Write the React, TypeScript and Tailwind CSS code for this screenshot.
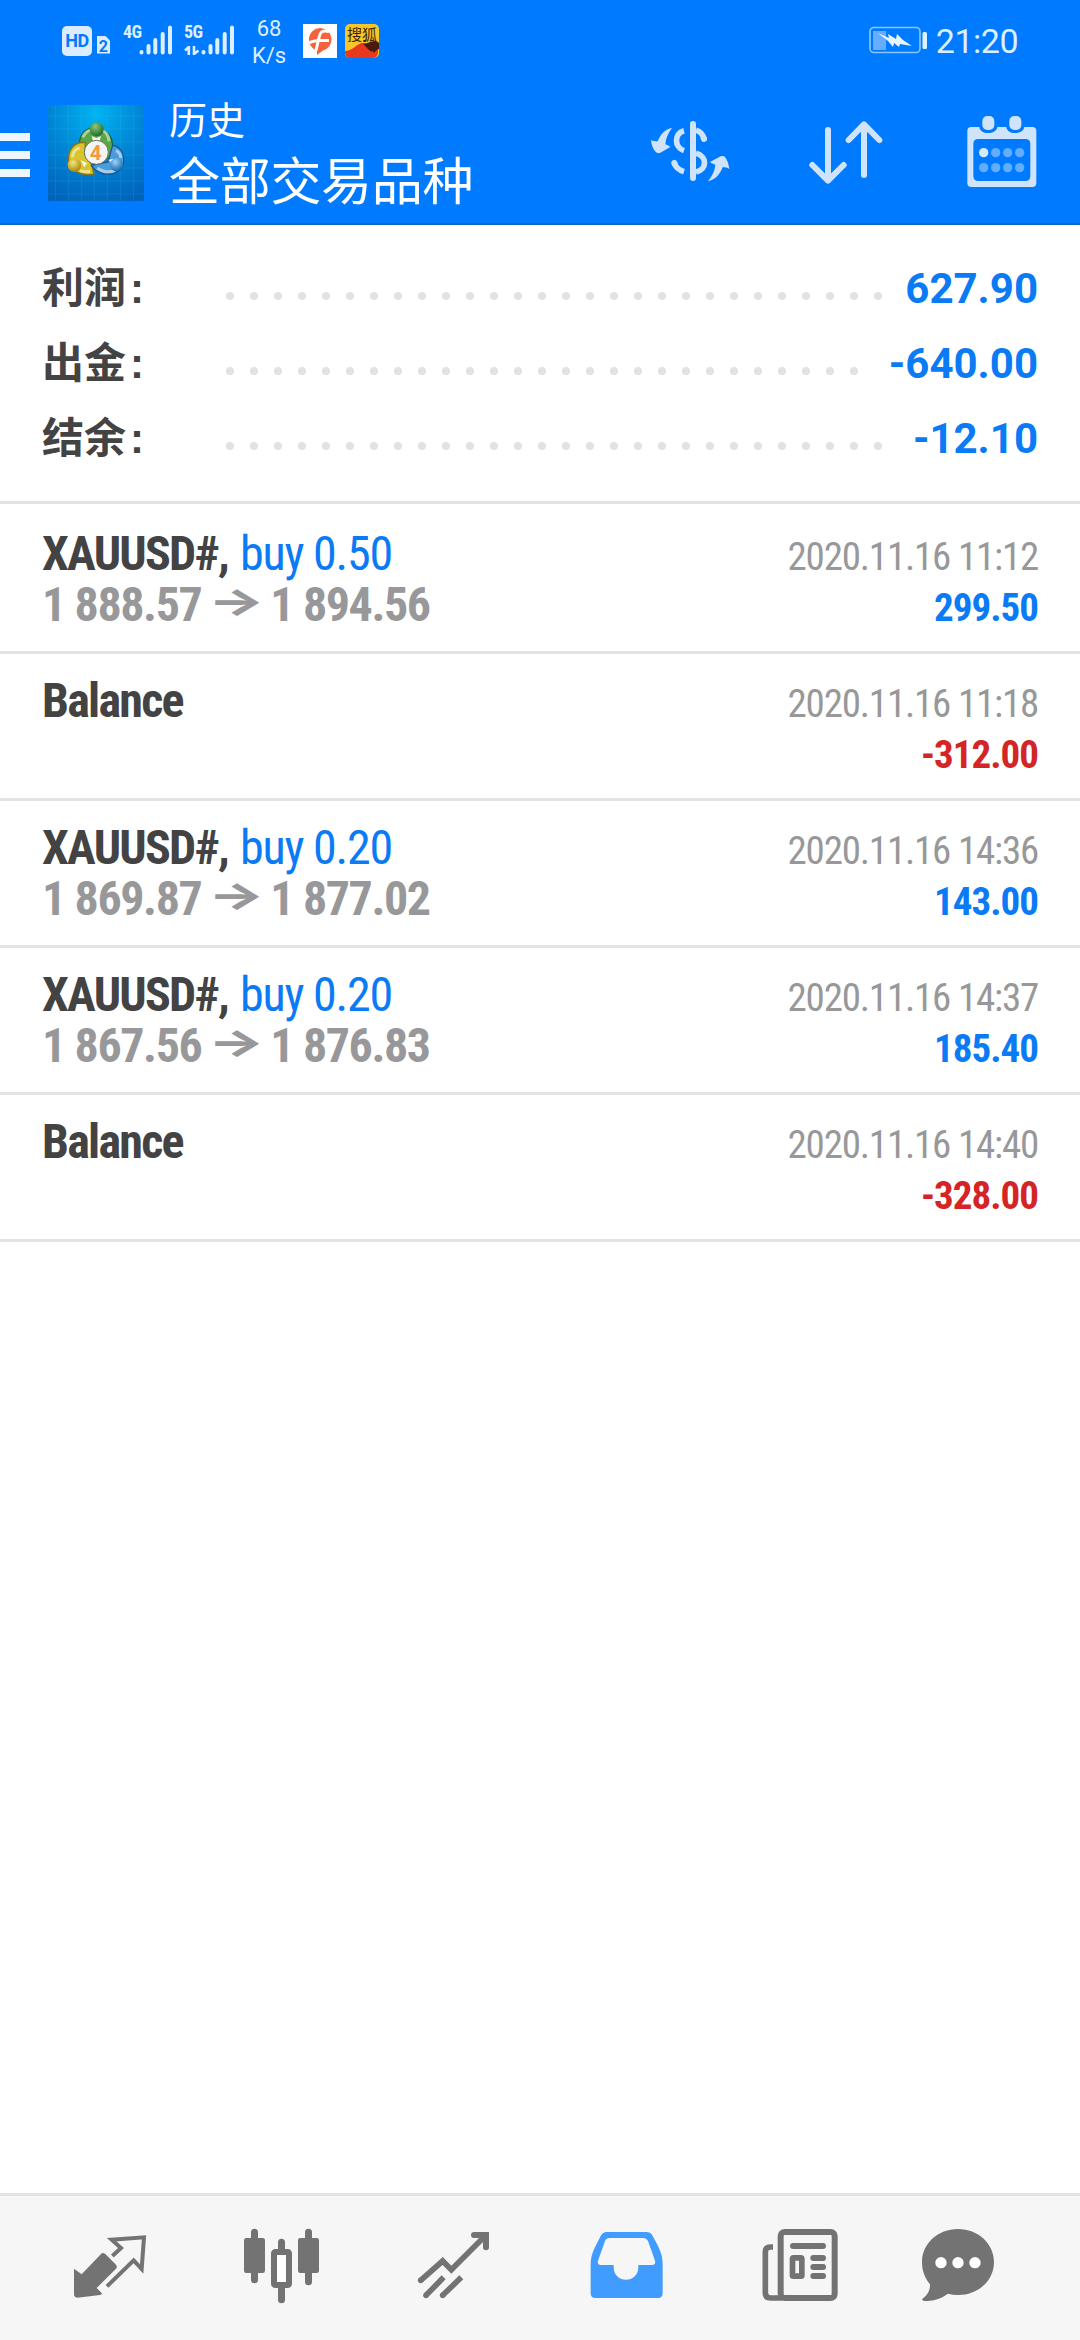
import type { ReactNode } from "react";

type SummaryLine = {
  label: string;
  value: string;
};

type Deal = {
  title: string;
  side?: string;
  open?: string;
  close?: string;
  time: string;
  profit: string;
};

const summary: SummaryLine[] = [
  { label: "利润", value: "627.90" },
  { label: "出金", value: "-640.00" },
  { label: "结余", value: "-12.10" },
];

const deals: Deal[] = [
  { title: "XAUUSD#,", side: "buy 0.50", open: "1 888.57", close: "1 894.56", time: "2020.11.16 11:12", profit: "299.50" },
  { title: "Balance", time: "2020.11.16 11:18", profit: "-312.00" },
  { title: "XAUUSD#,", side: "buy 0.20", open: "1 869.87", close: "1 877.02", time: "2020.11.16 14:36", profit: "143.00" },
  { title: "XAUUSD#,", side: "buy 0.20", open: "1 867.56", close: "1 876.83", time: "2020.11.16 14:37", profit: "185.40" },
  { title: "Balance", time: "2020.11.16 14:40", profit: "-328.00" },
];

function SignalBars() {
  return (
    <svg className="w-[33px] h-[30px]" viewBox="0 0 33 30" stroke="#dcefff" strokeWidth="4" strokeLinecap="round">
      <path d="M2.5 27v.5M9.5 21v6.5M16.3 15v12.5M23.7 9v18.5M31 2.5v25" />
    </svg>
  );
}

function StatusBar() {
  return (
    <div className="flex h-[82px] px-[62px] text-[#dcefff]">
      <div className="mt-[26px] w-[30px] h-[30px] rounded-[5px] bg-[#dcecff] text-[#007aff] text-[18px] leading-[30px] font-bold text-center tracking-[-0.5px]">
        HD
      </div>
      <svg className="mt-[35px] ml-[5px] w-[13px] h-[19px]" viewBox="0 0 13 19">
        <path d="M0 1h8.5l4.500 4.500v13H0z" fill="#dcecff" />
        <text x="6.3" y="16.5" fontSize="16" fontWeight="700" textAnchor="middle" fill="#007aff">2</text>
      </svg>
      <div className="flex mt-[25px] ml-[13px]">
        <span className="w-[16px] font-['Roboto_Condensed'] font-bold text-[18px] leading-[14px] tracking-[-0.5px]">4G</span>
        <SignalBars />
      </div>
      <div className="flex mt-[25px] ml-[12px]">
        <div className="w-[17px]">
          <span className="block font-['Roboto_Condensed'] font-bold text-[18px] leading-[14px] tracking-[-0.5px]">5G</span>
          <svg className="mt-[7px] w-[16px] h-[9px]" viewBox="0 0 16 9" fill="none" stroke="#dcefff" strokeWidth="2.6">
            <path d="M1 4.500L4.800 1V9M10 0v8L14.500 4.500" />
          </svg>
        </div>
        <SignalBars />
      </div>
      <div className="mt-[15px] ml-[15px] w-[40px] text-center text-[22px] leading-[27px]">
        68
        <br />
        K/s
      </div>
      <svg className="mt-[24px] ml-[14px] w-[34px] h-[34px]" viewBox="0 0 34 34">
        <path d="M0 0h34v34H0z" fill="#fff" />
        <path d="M17 4a11.500 11.500 0 0 1 3 22.600L14 31v-4.500A11.500 11.500 0 0 1 17 4z" fill="#f4633c" />
        <path d="M26 7.500c-7-2-9 1-10 6l-3 13M6 19c5-3 10-2.500 14-2.500h6" fill="none" stroke="#fff" strokeWidth="3" />
      </svg>
      <svg className="mt-[24px] ml-[8px] w-[34px] h-[34px]" viewBox="0 0 34 34">
        <rect width="34" height="34" rx="5" fill="#f7c52c" />
        <path d="M0 27c8 0 12-8 18-8 7 0 6 5 15 5v5q-1 5-5 5H5q-4 0-5-5z" fill="#e8391f" />
        <path d="M17 19c5 3 12-6 17 0v6c-4 1-5 6-6 2-3 2-6-4-11-8z" fill="#4a1a0c" />
        <text x="17" y="16" fontSize="15" textAnchor="middle" fill="#3a2506" className="font-['Noto_Sans_CJK_SC']">搜狐</text>
      </svg>
      <svg className="mt-[26px] ml-auto w-[59px] h-[28px]" viewBox="0 0 59 28">
        <rect x="1" y="1.500" width="50" height="25" rx="4" fill="none" stroke="#8cc8ff" strokeWidth="1.600" />
        <path d="M4 5h13v19H4z" fill="#66adff" />
        <path d="M9 7l11 5-1-4 8 5 1-5 6 6 9 6-12-2-1 3-5-4-1 4-5-6z" fill="#eaf6ff" />
        <rect x="53.500" y="6" width="4.500" height="17" rx="1.500" fill="#dcf3ff" />
      </svg>
      <span className="mt-[21px] ml-[8px] text-[34px] leading-[40px] tracking-[-0.5px]">21:20</span>
    </div>
  );
}

function AppLogo() {
  return (
    <svg className="w-[96px] h-[96px]" viewBox="24 15 288 288">
      <defs>
        <radialGradient id="sky" cx="0.5" cy="0.1" r="0.95">
          <stop offset="0" stopColor="#00b4f2" />
          <stop offset="0.5" stopColor="#0085d4" />
          <stop offset="1" stopColor="#0063bb" />
        </radialGradient>
        <radialGradient id="green" cx="0.4" cy="0.3" r="0.7">
          <stop offset="0" stopColor="#8fc97a" />
          <stop offset="1" stopColor="#1d6b2c" />
        </radialGradient>
        <radialGradient id="yellow" cx="0.4" cy="0.3" r="0.7">
          <stop offset="0" stopColor="#f5e878" />
          <stop offset="1" stopColor="#a8860f" />
        </radialGradient>
        <radialGradient id="blue" cx="0.4" cy="0.3" r="0.7">
          <stop offset="0" stopColor="#9cd4f8" />
          <stop offset="1" stopColor="#1769b0" />
        </radialGradient>
      </defs>
      <path d="M24 15h288v288H24z" fill="url(#sky)" />
      <path
        d="M46 15v288M85 15v288M124 15v288M163 15v288M202 15v288M241 15v288M280 15v288M24 48h288M24 87h288M24 126h288M24 165h288M24 204h288M24 243h288M24 282h288"
        stroke="#5cc8f5"
        strokeOpacity="0.22"
        strokeWidth="2"
      />
      <path d="M118 140c-2-38 20-58 50-58s52 30 50 62q-2 24-12 34l-20-40z" fill="#5aa548" stroke="#1f6a30" strokeWidth="4" />
      <path d="M136 128c-35-5-52 25-50 52 0 28 34 50 76 42l-8-30-20-30z" fill="#d9c42b" stroke="#8a7418" strokeWidth="4" />
      <path d="M218 136c32 5 38 40 30 64-14 26-66 36-94-4l50-10z" fill="#4a9ddb" stroke="#16599b" strokeWidth="4" />
      <path
        d="M128 112c8-16 20-22 28-24M186 90c14 6 20 20 21 34M97 172c2-16 10-26 22-28M120 212c12 4 20 4 30 2M172 204c18 14 34 14 52 8M228 152c10 4 14 12 14 22"
        fill="none"
        stroke="#fff"
        strokeOpacity="0.5"
        strokeWidth="9"
      />
      <path d="M122 180l20 10-10 12zM205 180l14-4 2 18zM155 108l14 6 14-6-4 16h-20z" fill="#eef4ea" />
      <circle cx="170" cy="88" r="21" fill="url(#green)" />
      <circle cx="103" cy="196" r="20" fill="url(#yellow)" />
      <circle cx="230" cy="194" r="20" fill="url(#blue)" />
      <circle cx="169" cy="157" r="36" fill="#f4f4f4" stroke="#66705c" strokeWidth="3" />
      <text x="167" y="180" fontSize="62" fontWeight="700" textAnchor="middle" fill="#f29a3c">4</text>
    </svg>
  );
}

function Header() {
  return (
    <header className="h-[225px] bg-[#007aff] border-b-2 border-[#0a68cc]">
      <StatusBar />
      <div className="flex">
        <div className="flex flex-col gap-[10px] mt-[51px] w-[30px]">
          <div className="h-2 bg-[#eef7ff]" />
          <div className="h-2 bg-[#eef7ff]" />
          <div className="h-2 bg-[#eef7ff]" />
        </div>
        <div className="mt-[23px] ml-[18px]">
          <AppLogo />
        </div>
        <div className="flex flex-col ml-[25px] mt-[14px] text-white">
          <span className="text-[38px] leading-[50px]">历史</span>
          <h1 className="mt-[3px] text-[51px] leading-[68px] tracking-[-0.3px]">全部交易品种</h1>
        </div>
        <div className="flex ml-auto pr-[43px] text-[#cfe4fb]">
          <svg className="mt-[38px] w-[80px] h-[62px]" viewBox="150 360 240 186" fill="none" stroke="currentColor">
            <path d="M279 372v162" strokeWidth="18" strokeLinecap="round" />
            <path d="M252 392c-30 8-30 50 0 60M222 488c4 12 14 22 30 27" strokeWidth="17" />
            <path d="M223 489l1 2" strokeWidth="18" strokeLinecap="round" />
            <path d="M288 391c12 3 20 10 25 27M288 460c34 8 34 48 0 56" strokeWidth="17" />
            <path d="M311 414l1 3" strokeWidth="18" strokeLinecap="round" />
            <path
              d="M216 384c-20 3-34 17-43 40-8 0-14-1-20-4 1 14 6 28 15 37 4 3 8 3 13 1l30-17c-5-4-10-6-15-8 1-18 9-34 20-49z"
              fill="currentColor"
              stroke="none"
            />
            <path
              d="M324 544c20-4 35-19 44-42 8 0 14 1 20 5-2-14-6-27-13-36-3-4-8-4-13-2l-32 17c5 4 10 6 16 8-1 18-10 34-22 50z"
              fill="currentColor"
              stroke="none"
            />
          </svg>
          <svg
            className="mt-[37px] ml-[77px] w-[78px] h-[66px]"
            viewBox="621 357 234 198"
            fill="none"
            stroke="currentColor"
            strokeWidth="18"
            strokeLinecap="round"
            strokeLinejoin="round"
          >
            <path d="M684 390v150M637 495l47 47 47-47" />
            <path d="M792 525V376M746 420l46-47 46 47" />
          </svg>
          <svg className="mt-[33px] ml-[82px] w-[70px] h-[73px]" viewBox="1103 345 210 219">
            <path
              d="M1116 381h24c2 12 12 18 26 18s26-6 28-18h27c2 12 12 18 26 18s26-6 28-18h24q12 0 12 12v156q0 12-12 12h-183q-12 0-12-12V393q0-12 12-12zM1137 417q-15 0-15 15v96q0 15 15 15h141q15 0 15-15v-96q0-15-15-15z"
              fill="currentColor"
              fillRule="evenodd"
            />
            <rect x="1149" y="348" width="36" height="42" rx="15" fill="currentColor" />
            <rect x="1230" y="348" width="36" height="42" rx="15" fill="currentColor" />
            <g fill="#62adff">
              <circle cx="1153" cy="458" r="14" fill="#d8e8fb" />
              <circle cx="1189" cy="458" r="14" />
              <circle cx="1225" cy="458" r="14" />
              <circle cx="1261" cy="458" r="14" />
              <circle cx="1153" cy="503" r="14" />
              <circle cx="1189" cy="503" r="14" />
              <circle cx="1225" cy="503" r="14" />
              <circle cx="1261" cy="503" r="14" />
            </g>
          </svg>
        </div>
      </div>
    </header>
  );
}

function SummaryRow({ line }: { line: SummaryLine }) {
  return (
    <div className="flex h-[75px] text-[42px] leading-[75px] font-bold">
      <span className="w-[176px] text-[#434343]">
        {line.label}
        <span className="ml-1 font-['Liberation_Sans']">:</span>
      </span>
      {/* dots that do not fit wrap out of sight */}
      <div className="flex flex-1 flex-wrap mt-[41px] mr-[13px] h-2 overflow-hidden">
        {Array.from({ length: 28 }, (_, i) => (
          <span key={i} className="mx-2 w-2 h-2 rounded-full bg-[#e2e2e2]" />
        ))}
      </div>
      <span className="text-[#0a7af5]">{line.value}</span>
    </div>
  );
}

function DealRow({ deal }: { deal: Deal }) {
  const loss = deal.profit.startsWith("-");
  return (
    <li className="flex justify-between h-[147px] px-[42px] pt-[21px] border-b-3 border-[#e3e3e3] font-['Roboto_Condensed'] leading-[51px] first:h-[150px] first:pt-[24px]">
      <div className="text-[48px]">
        <p>
          <span className="font-bold text-[#434343] tracking-[-1.75px]">{deal.title}</span>
          {deal.side && <span className="ml-[12px] text-[#0a7af5] tracking-[-1.2px]">{deal.side}</span>}
        </p>
        {deal.open && (
          <p className="flex font-bold text-[#98989a] tracking-[-1.4px]">
            {deal.open}
            <span className="w-[69px] text-center font-['Inter'] font-extrabold scale-x-125 scale-y-75 -translate-y-[4px]">→</span>
            {deal.close}
          </p>
        )}
      </div>
      <div className="pt-1 text-right text-[39px]">
        <p className="text-[#98989a] tracking-[-1.2px]">{deal.time}</p>
        <p className={loss ? "font-bold tracking-[-1px] text-[#d42426]" : "font-bold tracking-[-1px] text-[#0a7af5]"}>
          {deal.profit}
        </p>
      </div>
    </li>
  );
}

function NavIcon({ viewBox, children }: { viewBox: string; children: ReactNode }) {
  return (
    <svg className="w-[96px] h-[80px]" viewBox={viewBox} fill="currentColor">
      {children}
    </svg>
  );
}

function BottomNav() {
  return (
    <nav className="flex gap-[76px] h-[147px] pl-[62px] pt-[30px] bg-[#f6f6f6] border-t-3 border-[#e2e2e2] text-[#737373]">
      <NavIcon viewBox="6 108 288 240">
        <path d="M42 236l23 17 58-61q6-6 13 0l32 32q5 6 0 12l-58 58 15 15q2 5-5 6l-68 8q-10 0-10-10z" />
        <path d="M157 198l26-24-28-25 97-7-7 95-24-26-80 78" fill="none" stroke="currentColor" strokeWidth="12" />
      </NavIcon>
      <NavIcon viewBox="522 108 288 240">
        <rect x="552" y="144" width="63" height="105" rx="7" />
        <rect x="714" y="144" width="63" height="105" rx="7" />
        <path
          d="M583.5 127v142M745.5 127v148M664.5 157v28M664.5 290v39"
          stroke="currentColor"
          strokeWidth="21"
          strokeLinecap="round"
        />
        <rect x="642" y="186" width="45" height="99" rx="4" fill="#fff" stroke="currentColor" strokeWidth="18" />
      </NavIcon>
      <NavIcon viewBox="1038 108 288 240">
        <g fill="none" stroke="currentColor" strokeWidth="17">
          <path d="M1082 271l66-58 26 26 104-104" />
          <path d="M1242 135h36v37" strokeWidth="18" strokeLinecap="round" />
          <path d="M1151 262l-53 54M1204 262l-56 54" />
        </g>
        <circle cx="1082" cy="271" r="8.5" />
        <circle cx="1098" cy="316" r="8.5" />
        <circle cx="1148" cy="316" r="8.5" />
      </NavIcon>
      <NavIcon viewBox="54 108 288 240">
        <path
          d="M140 126h120q12 0 18 12c20 36 30 55 30 85v87q0 14-14 14H106q-14 0-14-14v-87c0-30 12-50 30-85q6-12 18-12zM150 144q-11 0-15 9l-21 59q-3 13 9 13h38v7c0 50 74 50 74 0v-7h41q12 0 9-13l-21-59q-5-9-15-9z"
          fill="#419cff"
          fillRule="evenodd"
        />
      </NavIcon>
      <NavIcon viewBox="570 108 288 240">
        <g fill="none" stroke="currentColor">
          <rect x="662" y="126" width="162" height="198" rx="12" strokeWidth="18" />
          <path d="M639 171h-8q-15 0-15 15v123q0 15 15 15h35" strokeWidth="17" />
          <path d="M699 168h90M760 204h29M760 231h29M760 258h29" strokeWidth="18" strokeLinecap="round" />
          <rect x="697.5" y="203.5" width="28" height="55" rx="3" strokeWidth="17" />
        </g>
      </NavIcon>
      <NavIcon viewBox="1086 108 288 240">
        <path d="M1194 117c60 0 108 44 108 99s-46 99-108 99q-16 0-30-4c-22 16-46 22-71 22q-10-2-4-8c16-12 22-28 21-42-15-18-24-40-24-67 0-55 48-99 108-99z" />
        <g fill="#fff">
          <circle cx="1143" cy="218" r="17" />
          <circle cx="1194" cy="218" r="17" />
          <circle cx="1245" cy="218" r="17" />
        </g>
      </NavIcon>
    </nav>
  );
}

export default function App() {
  return (
    <div className="flex flex-col w-[1080px] h-[2340px] bg-white font-['Roboto','Noto_Sans_CJK_SC',sans-serif]">
      <Header />
      <section className="h-[279px] px-[42px] pt-[26px] border-b-3 border-[#e3e3e3]">
        {summary.map((line) => (
          <SummaryRow key={line.label} line={line} />
        ))}
      </section>
      <ul className="flex-1">
        {deals.map((deal) => (
          <DealRow key={deal.time} deal={deal} />
        ))}
      </ul>
      <BottomNav />
    </div>
  );
}
